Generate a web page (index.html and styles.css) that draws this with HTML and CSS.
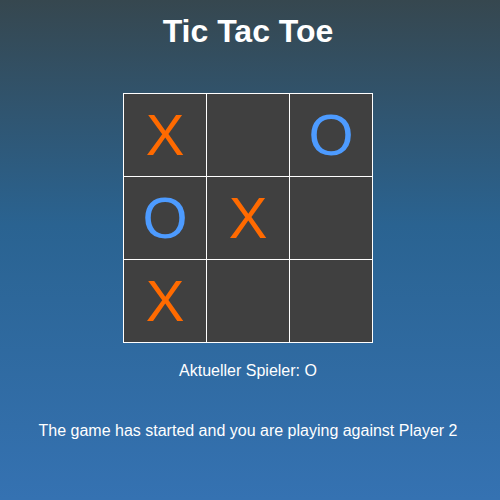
FILE: index.html
```html
<!DOCTYPE html>
<html>
<head>
<meta charset="utf-8">
<link rel="stylesheet" href="styles.css">
</head>
<body>
<main class="app">
  <h1 class="title">Tic Tac Toe</h1>
  <div class="board">
    <div class="cell x">X</div>
    <div class="cell"></div>
    <div class="cell o">O</div>
    <div class="cell o">O</div>
    <div class="cell x">X</div>
    <div class="cell"></div>
    <div class="cell x">X</div>
    <div class="cell"></div>
    <div class="cell"></div>
  </div>
  <p class="status">Aktueller Spieler: O</p>
  <p class="message">The game has started and you are playing against Player 2</p>
</main>
</body>
</html>
```

FILE: styles.css
```css
html, body {
  margin: 0;
  height: 100%;
}
body {
  background: linear-gradient(to bottom, #36474f 0%, #2a6391 45%, #3572b2 100%);
  font-family: "Liberation Sans", Arial, sans-serif;
  color: #fff;
}
.app {
  display: flex;
  flex-direction: column;
  align-items: center;
  padding-right: 4px;
}
.title {
  margin: 13px 0 0;
  font-size: 32px;
  font-weight: bold;
  line-height: 37px;
}
.board {
  margin-top: 43px;
  display: grid;
  grid-template-columns: repeat(3, 82px);
  grid-template-rows: repeat(3, 82px);
  gap: 1px;
  padding: 1px;
  background: #fff;
}
.cell {
  background: #404040;
  display: flex;
  align-items: center;
  justify-content: center;
  font-size: 58px;
  line-height: 1;
}
.x { color: #ff6a00; }
.o { color: #4d9bff; }
.status {
  margin: 18px 0 0;
  font-size: 16px;
  line-height: 20px;
}
.message {
  margin: 40px 0 0;
  font-size: 16px;
  line-height: 20px;
}
```
